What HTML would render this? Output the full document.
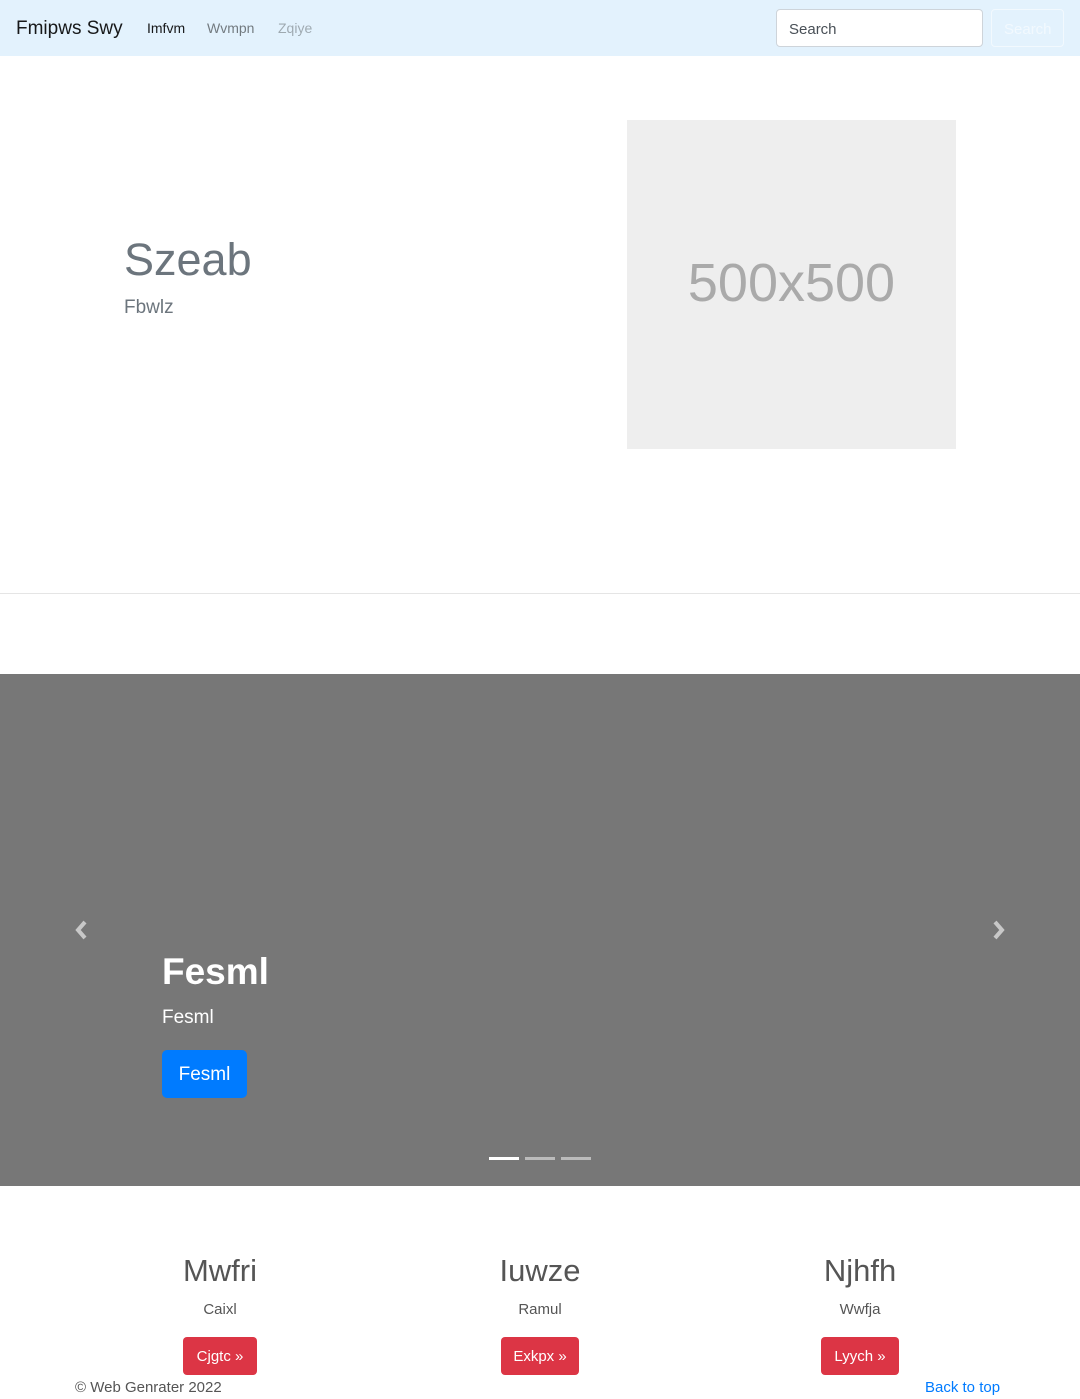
<!DOCTYPE html>
<html><head><meta charset="utf-8"><style>
*{box-sizing:border-box;margin:0;padding:0}
body{width:1080px;height:1399px;overflow:hidden;font-family:"Liberation Sans",sans-serif;color:#212529;background:#fff;position:relative}
.abs{position:absolute}
nav{position:absolute;top:0;left:0;width:1080px;height:56px;background:#e3f2fd}
</style></head><body>
<nav>
<div class="abs" style="left:16px;top:18px;font-size:19px;color:rgba(0,0,0,.9)">Fmipws Swy</div>
<div class="abs" style="left:147px;top:20px;font-size:14px;color:rgba(0,0,0,.9)">Imfvm</div>
<div class="abs" style="left:207px;top:20px;font-size:14px;color:rgba(0,0,0,.5)">Wvmpn</div>
<div class="abs" style="left:278px;top:20px;font-size:14px;color:rgba(0,0,0,.3)">Zqiye</div>
<div class="abs" style="left:776px;top:9px;width:207px;height:38px;background:#fff;border:1px solid #ced4da;border-radius:4px;padding:11px 12px;font-size:15px;color:#495057">Search</div>
<div class="abs" style="left:991px;top:9px;width:73px;height:38px;border:1px solid #f2f9fe;border-radius:4px;padding:11px 12px;font-size:15px;color:#f2f9fe">Search</div>
</nav>
<div class="abs" style="left:124px;top:234px;font-size:45px;color:#6c757d">Szeab</div>
<div class="abs" style="left:124px;top:297px;font-size:19px;color:#6c757d">Fbwlz</div>
<div class="abs" style="left:627px;top:120px;width:329px;height:329px;background:#eee;display:flex;align-items:center;justify-content:center;font-size:54px;color:#aaa;padding-bottom:4px">500x500</div>
<div class="abs" style="left:0;top:593px;width:1080px;height:1px;background:#e5e5e5"></div>
<div class="abs" style="left:0;top:674px;width:1080px;height:512px;background:#777"></div>
<svg class="abs" style="left:72px;top:919px" width="20" height="22" viewBox="0 0 20 22"><path d="M13 3 L6 11 L13 19" stroke="#c8c8c8" stroke-width="4" fill="none"/></svg>
<svg class="abs" style="left:988px;top:919px" width="20" height="22" viewBox="0 0 20 22"><path d="M7 3 L14 11 L7 19" stroke="#c8c8c8" stroke-width="4" fill="none"/></svg>
<div class="abs" style="left:162px;top:951px;font-size:37px;font-weight:bold;color:#fff">Fesml</div>
<div class="abs" style="left:162px;top:1007px;font-size:19px;color:#fff">Fesml</div>
<div class="abs" style="left:162px;top:1050px;width:85px;height:48px;background:#007bff;border-radius:5px;color:#fff;font-size:19px;text-align:center;line-height:50px">Fesml</div>
<div class="abs" style="left:489px;top:1157px;width:30px;height:3px;background:#fff"></div>
<div class="abs" style="left:525px;top:1157px;width:30px;height:3px;background:#bbb"></div>
<div class="abs" style="left:561px;top:1157px;width:30px;height:3px;background:#bbb"></div>
<div class="abs" style="left:60px;top:1253px;width:320px;text-align:center;font-size:31px;color:#555">Mwfri</div>
<div class="abs" style="left:60px;top:1301px;width:320px;text-align:center;font-size:15px;color:#555">Caixl</div>
<div class="abs" style="left:183px;top:1337px;width:74px;height:38px;background:#dc3545;border-radius:4px;color:#fff;font-size:15px;text-align:center;line-height:40px">Cjgtc »</div>
<div class="abs" style="left:380px;top:1253px;width:320px;text-align:center;font-size:31px;color:#555">Iuwze</div>
<div class="abs" style="left:380px;top:1301px;width:320px;text-align:center;font-size:15px;color:#555">Ramul</div>
<div class="abs" style="left:501px;top:1337px;width:78px;height:38px;background:#dc3545;border-radius:4px;color:#fff;font-size:15px;text-align:center;line-height:40px">Exkpx »</div>
<div class="abs" style="left:700px;top:1253px;width:320px;text-align:center;font-size:31px;color:#555">Njhfh</div>
<div class="abs" style="left:700px;top:1301px;width:320px;text-align:center;font-size:15px;color:#555">Wwfja</div>
<div class="abs" style="left:821px;top:1337px;width:78px;height:38px;background:#dc3545;border-radius:4px;color:#fff;font-size:15px;text-align:center;line-height:40px">Lyych »</div>
<div class="abs" style="left:75px;top:1379px;font-size:15px;color:#555">© Web Genrater 2022</div>
<div class="abs" style="left:925px;top:1379px;font-size:15px;color:#007bff">Back to top</div>
</body></html>
